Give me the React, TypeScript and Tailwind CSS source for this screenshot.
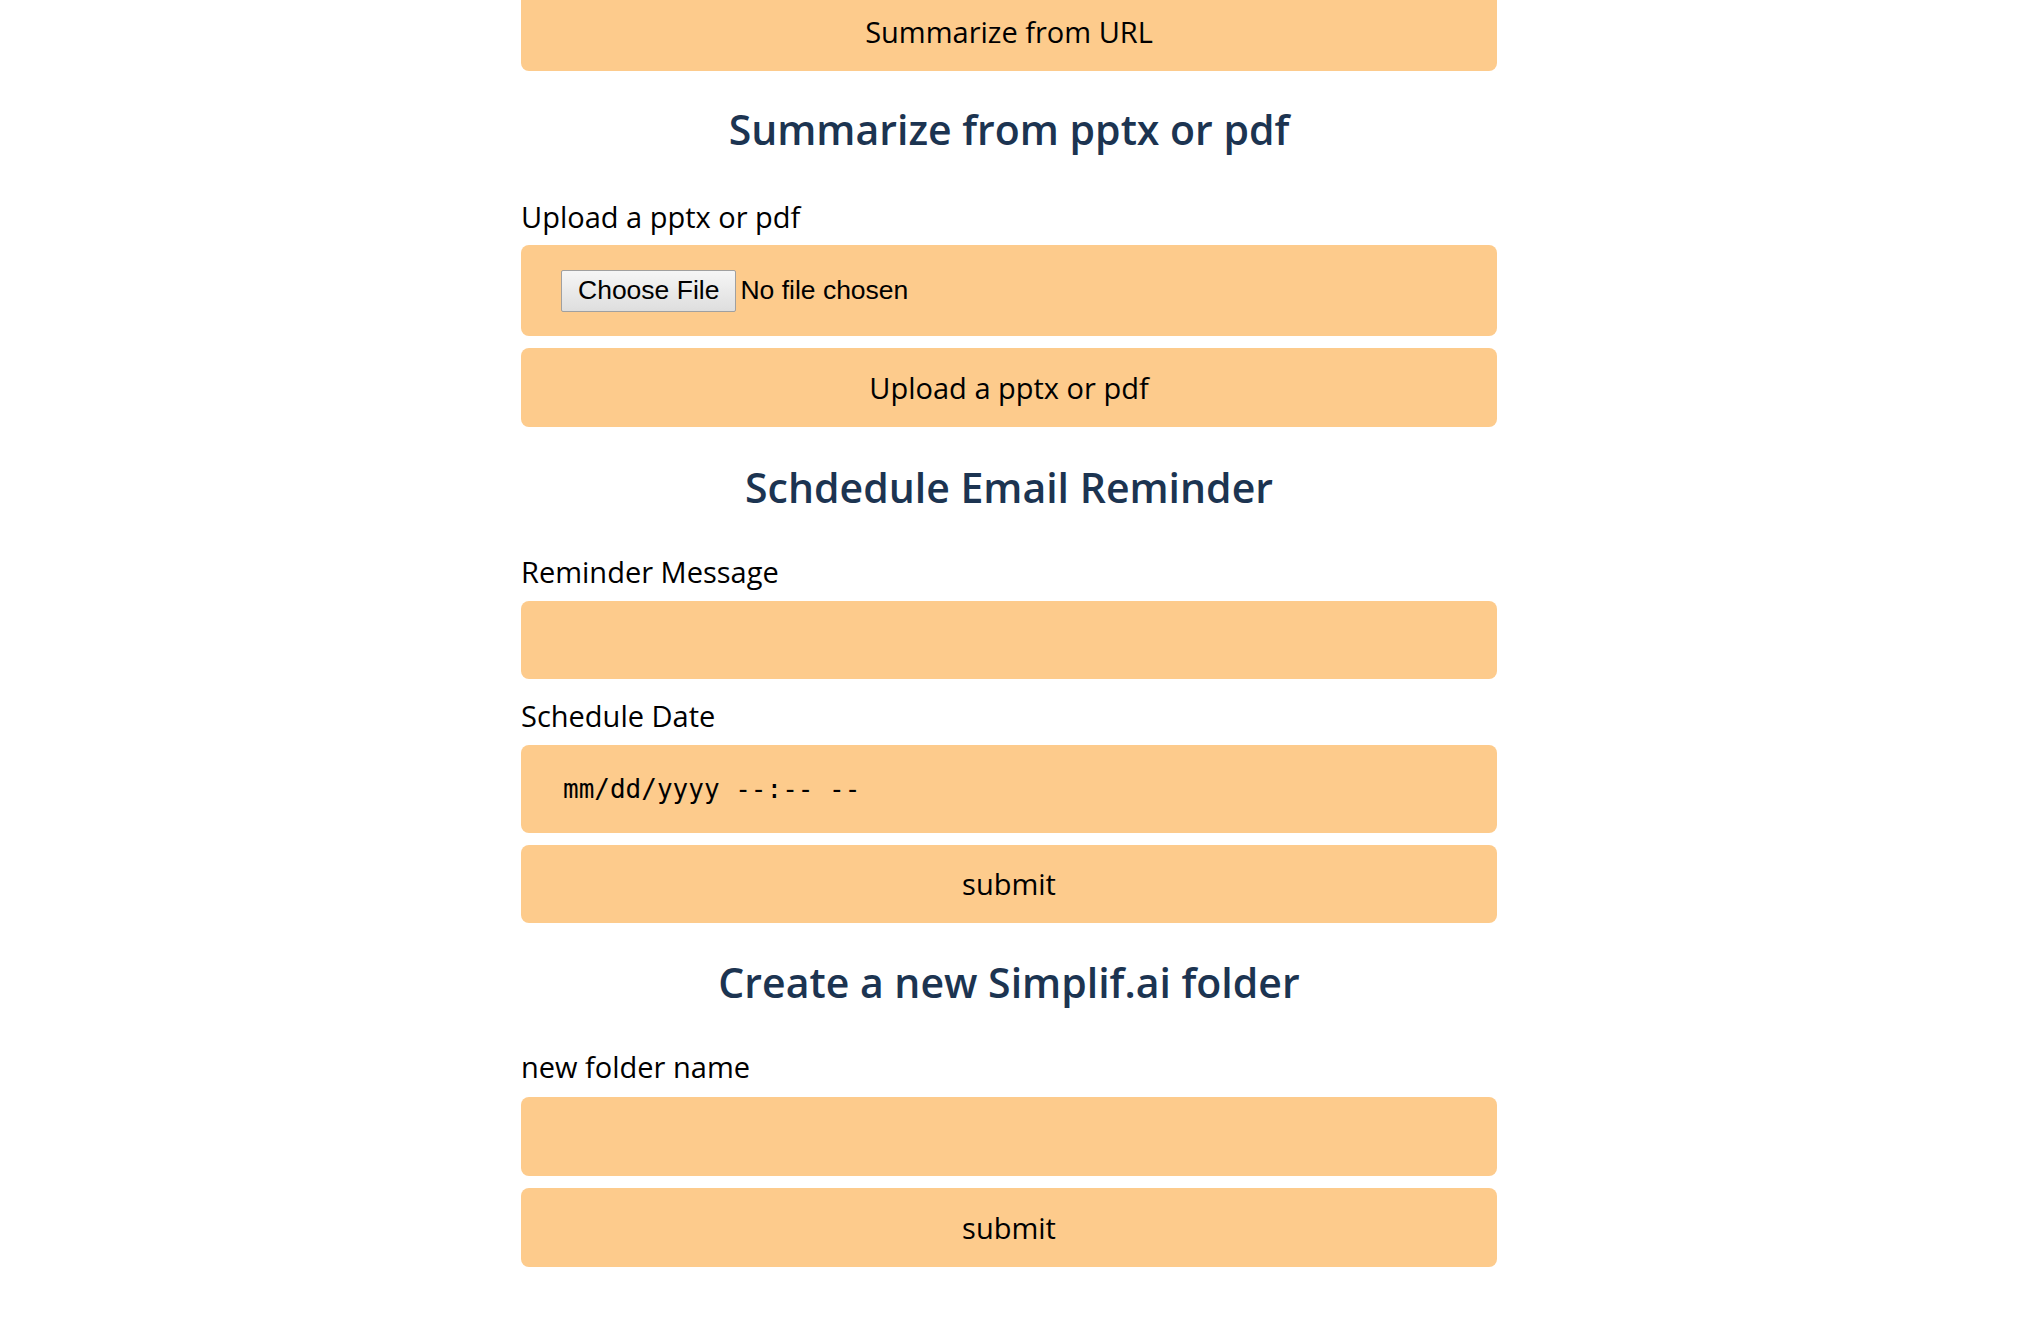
import { useState } from "react";

const box = "w-full rounded-lg bg-[#fdcb8c]";
const btn = `${box} h-[79px] flex items-center justify-center text-[29px] text-black`;

function Heading({ children, className = "" }: { children: string; className?: string }) {
  return (
    <h2 className={`text-center text-[41px] leading-[52px] font-semibold text-[#1c3451] ${className}`}>
      {children}
    </h2>
  );
}

function Label({ children, className = "" }: { children: string; className?: string }) {
  return <label className={`block text-[29px] leading-[36px] text-black ${className}`}>{children}</label>;
}

export default function App() {
  const [message, setMessage] = useState("");
  const [folder, setFolder] = useState("");

  return (
    <div className="min-h-screen bg-white font-['Open_Sans',sans-serif] overflow-hidden flex justify-center pr-[5px]">
      <div className="w-[976px] flex flex-col pb-12">
        <button className={`${btn} -mt-2`}>Summarize from URL</button>

        <Heading className="mt-[32px]">Summarize from pptx or pdf</Heading>

        <Label className="mt-[44px]">Upload a pptx or pdf</Label>
        <div className={`${box} mt-[10px] h-[91px] flex items-center px-[40px]`}>
          <span className="h-[42px] px-[16px] flex items-center border border-[#a0a0a0] rounded-[2px] bg-gradient-to-b from-[#f6f6f6] to-[#dedede] font-['Liberation_Sans',Arial,sans-serif] text-[26.5px] text-black">
            Choose File
          </span>
          <span className="ml-[4px] font-['Liberation_Sans',Arial,sans-serif] text-[26.5px] text-black">
            No file chosen
          </span>
        </div>
        <button className={`${btn} mt-[12px]`}>Upload a pptx or pdf</button>

        <Heading className="mt-[34px]">Schdedule Email Reminder</Heading>

        <Label className="mt-[41px]">Reminder Message</Label>
        <input
          value={message}
          onChange={(e) => setMessage(e.target.value)}
          className={`${box} mt-[11px] h-[78px] px-[40px] text-[28px] outline-none`}
        />

        <Label className="mt-[19px]">Schedule Date</Label>
        <div className={`${box} mt-[11px] h-[88px] flex items-center pl-[42px] font-['DejaVu_Sans_Mono',monospace] text-[26px] text-black whitespace-pre`}>
          mm/dd/yyyy --:-- --
        </div>
        <button className={`${btn} mt-[12px] !h-[78px]`}>submit</button>

        <Heading className="mt-[33px]">Create a new Simplif.ai folder</Heading>

        <Label className="mt-[41px]">new folder name</Label>
        <input
          value={folder}
          onChange={(e) => setFolder(e.target.value)}
          className={`${box} mt-[12px] h-[79px] px-[40px] text-[28px] outline-none`}
        />
        <button className={`${btn} mt-[12px]`}>submit</button>
      </div>
    </div>
  );
}
